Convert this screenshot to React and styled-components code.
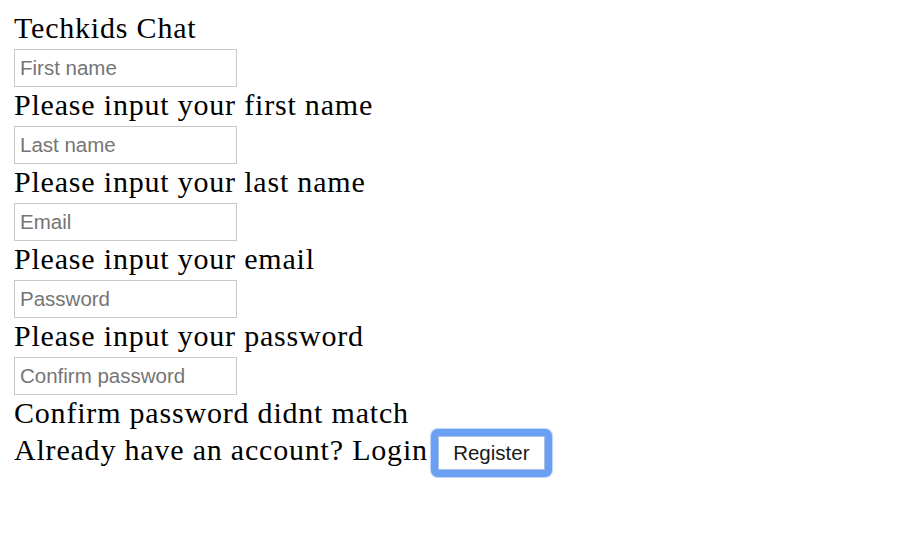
import React from 'react';
import styled, { createGlobalStyle } from 'styled-components';

const GlobalStyle = createGlobalStyle`
  html, body {
    margin: 0;
    padding: 0;
    background: #ffffff;
  }
`;

const fields = [
  { placeholder: 'First name', type: 'text', error: 'Please input your first name' },
  { placeholder: 'Last name', type: 'text', error: 'Please input your last name' },
  { placeholder: 'Email', type: 'email', error: 'Please input your email' },
  { placeholder: 'Password', type: 'password', error: 'Please input your password' },
  { placeholder: 'Confirm password', type: 'password', error: 'Confirm password didnt match' },
];

const App = () => {
  return (
    <Page>
      <GlobalStyle />
      <Form onSubmit={(e) => e.preventDefault()}>
        <Title>Techkids Chat</Title>
        {fields.map((f) => (
          <Field key={f.placeholder}>
            <Input type={f.type} placeholder={f.placeholder} />
            <ErrorText>{f.error}</ErrorText>
          </Field>
        ))}
        <FooterRow>
          <FooterText>Already have an account? Login</FooterText>
          <FocusRing>
            <RegisterButton type="submit">Register</RegisterButton>
          </FocusRing>
        </FooterRow>
      </Form>
    </Page>
  );
};

const Page = styled.div`
  padding: 12px 14px;
  font-family: "Liberation Serif", "Times New Roman", serif;
  color: #000000;
`;

const Form = styled.form`
  display: flex;
  flex-direction: column;
  align-items: flex-start;
`;

const Title = styled.div`
  font-size: 30px;
  line-height: 32px;
  letter-spacing: 0.8px;
`;

const Field = styled.div`
  display: flex;
  flex-direction: column;
  align-items: flex-start;
`;

const Input = styled.input`
  box-sizing: border-box;
  width: 223px;
  height: 38px;
  margin: 5px 0 2px;
  padding: 0 5px;
  border: 1px solid #c8c8c8;
  border-radius: 0;
  font-family: "Liberation Sans", Arial, sans-serif;
  font-size: 20.5px;
  color: #000000;
  background: #ffffff;
  outline: none;

  &::placeholder {
    color: #757575;
  }
`;

const ErrorText = styled.div`
  font-size: 30px;
  line-height: 32px;
  letter-spacing: 0.8px;
`;

const FooterRow = styled.div`
  display: flex;
  align-items: baseline;
`;

const FooterText = styled.span`
  font-size: 30px;
  line-height: 32px;
  letter-spacing: 0.8px;
`;

const FocusRing = styled.span`
  display: inline-flex;
  margin-left: 3px;
  padding: 7px;
  background: #6a9ff2;
  border-radius: 7px;
  box-shadow: 0 0 1px 1px rgba(106, 159, 242, 0.45);
`;

const RegisterButton = styled.button`
  box-sizing: border-box;
  width: 107px;
  height: 34px;
  margin: 0;
  padding: 0;
  background: #ffffff;
  border: 1px solid #a9bfe6;
  border-radius: 0;
  font-family: "Liberation Sans", Arial, sans-serif;
  font-size: 20.5px;
  color: #1a1a1a;
  cursor: pointer;
  outline: none;
`;

export default App;
